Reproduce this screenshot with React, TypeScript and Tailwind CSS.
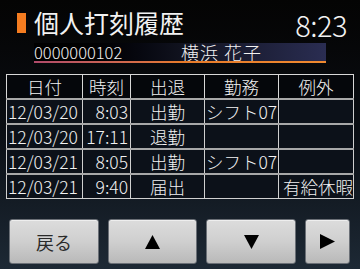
import React from "react";

const rows = [
  ["12/03/20", "8:03", "出勤", "シフト07", ""],
  ["12/03/20", "17:11", "退勤", "", ""],
  ["12/03/21", "8:05", "出勤", "シフト07", ""],
  ["12/03/21", "9:40", "届出", "", "有給休暇"],
];

const font = { fontFamily: '"Noto Sans CJK JP", "Noto Sans", sans-serif' };

function Tri({ dir }: { dir: "up" | "down" | "right" }) {
  const pts =
    dir === "up" ? "7.5,0 15,14 0,14" : dir === "down" ? "0,0 15,0 7.5,14" : "0,0 15,7.5 0,15";
  const w = 15;
  const h = dir === "right" ? 15 : 14;
  return (
    <svg width={w} height={h} viewBox={`0 0 ${w} ${h}`}>
      <polygon points={pts} fill="#000" />
    </svg>
  );
}

export default function App() {
  return (
    <div
      className="w-[360px] h-[269px] overflow-hidden flex flex-col bg-gradient-to-b from-[#040404] via-[#0b0f15] to-[#1d2935] text-[#f2f2f2]"
      style={font}
    >
      {/* title row */}
      <div className="flex items-center h-[24px] mt-[10px] pl-[17px] pr-[13px]">
        <div className="w-[9px] h-[20px] bg-[#f47c20] mt-[1px]" />
        <div className="ml-[8px] text-[25px] leading-[25px]">個人打刻履歴</div>
        <div className="ml-auto text-[29px] leading-[29px] mt-[5px] font-light tracking-[-0.5px]">8:23</div>
      </div>

      {/* name row */}
      <div className="ml-[34px] mt-[9px] w-[292px] h-[20px] flex flex-col">
        <div className="flex-1 flex items-center bg-gradient-to-r from-[#000000] via-[#10121e] to-[#2a2d52] font-light">
          <span className="w-[147px] text-[16.5px] leading-[16px]">0000000102</span>
          <span className="text-[18px] leading-[18px] tracking-[1px]">横浜 花子</span>
        </div>
        <div className="h-[2px] bg-gradient-to-r from-[#b04a6a] via-[#e67a2a] to-[#f08a30]" />
      </div>

      {/* table */}
      <table className="ml-[6px] mt-[11px] w-[347px] table-fixed border-collapse bg-[#0c1119] text-[17.5px] leading-[17px] font-light">
        <colgroup>
          <col className="w-[76px]" />
          <col className="w-[48px]" />
          <col className="w-[74px]" />
          <col className="w-[74px]" />
          <col className="w-[75px]" />
        </colgroup>
        <thead>
          <tr className="h-[24px] bg-[#05070b]">
            {["日付", "時刻", "出退", "勤務", "例外"].map((h) => (
              <th key={h} className="border border-[#d8d8d8] font-light text-center p-0">
                {h}
              </th>
            ))}
          </tr>
        </thead>
        <tbody>
          {rows.map((r, i) => (
            <tr key={i} className="h-[25px]">
              <td className="border border-[#d0d0d0] border-t-2 border-t-[#a8a8a8] p-0 pl-[1px] text-left whitespace-nowrap overflow-visible">{r[0]}</td>
              <td className="border border-[#d0d0d0] border-t-2 border-t-[#a8a8a8] p-0 pr-[2px] text-right whitespace-nowrap">{r[1]}</td>
              <td className="border border-[#d0d0d0] border-t-2 border-t-[#a8a8a8] p-0 text-center">{r[2]}</td>
              <td className="border border-[#d0d0d0] border-t-2 border-t-[#a8a8a8] p-0 pl-[1px] text-left whitespace-nowrap">{r[3]}</td>
              <td className="border border-[#d0d0d0] border-t-2 border-t-[#a8a8a8] p-0 text-right whitespace-nowrap">{r[4]}</td>
            </tr>
          ))}
        </tbody>
      </table>

      {/* buttons */}
      <div className="flex gap-[9px] pl-[9px] mt-[20px]">
        <div className="w-[90px] h-[45px] rounded-[3px] border border-[#6a6f76] bg-gradient-to-b from-[#dcdcdc] via-[#cfcfcf] to-[#b9b9b9] flex items-center justify-center text-[#2a2a2a] shadow-[inset_0_1px_0_#eeeeee]">
          <span className="text-[18px] leading-[18px]">戻る</span>
        </div>
        <div className="w-[89px] h-[45px] rounded-[3px] border border-[#6a6f76] bg-gradient-to-b from-[#dcdcdc] via-[#cfcfcf] to-[#b9b9b9] flex items-center justify-center shadow-[inset_0_1px_0_#eeeeee]">
          <Tri dir="up" />
        </div>
        <div className="w-[90px] h-[45px] rounded-[3px] border border-[#6a6f76] bg-gradient-to-b from-[#dcdcdc] via-[#cfcfcf] to-[#b9b9b9] flex items-center justify-center shadow-[inset_0_1px_0_#eeeeee]">
          <Tri dir="down" />
        </div>
        <div className="w-[45px] h-[45px] rounded-[3px] border border-[#6a6f76] bg-gradient-to-b from-[#dcdcdc] via-[#cfcfcf] to-[#b9b9b9] flex items-center justify-center shadow-[inset_0_1px_0_#eeeeee]">
          <Tri dir="right" />
        </div>
      </div>
    </div>
  );
}
